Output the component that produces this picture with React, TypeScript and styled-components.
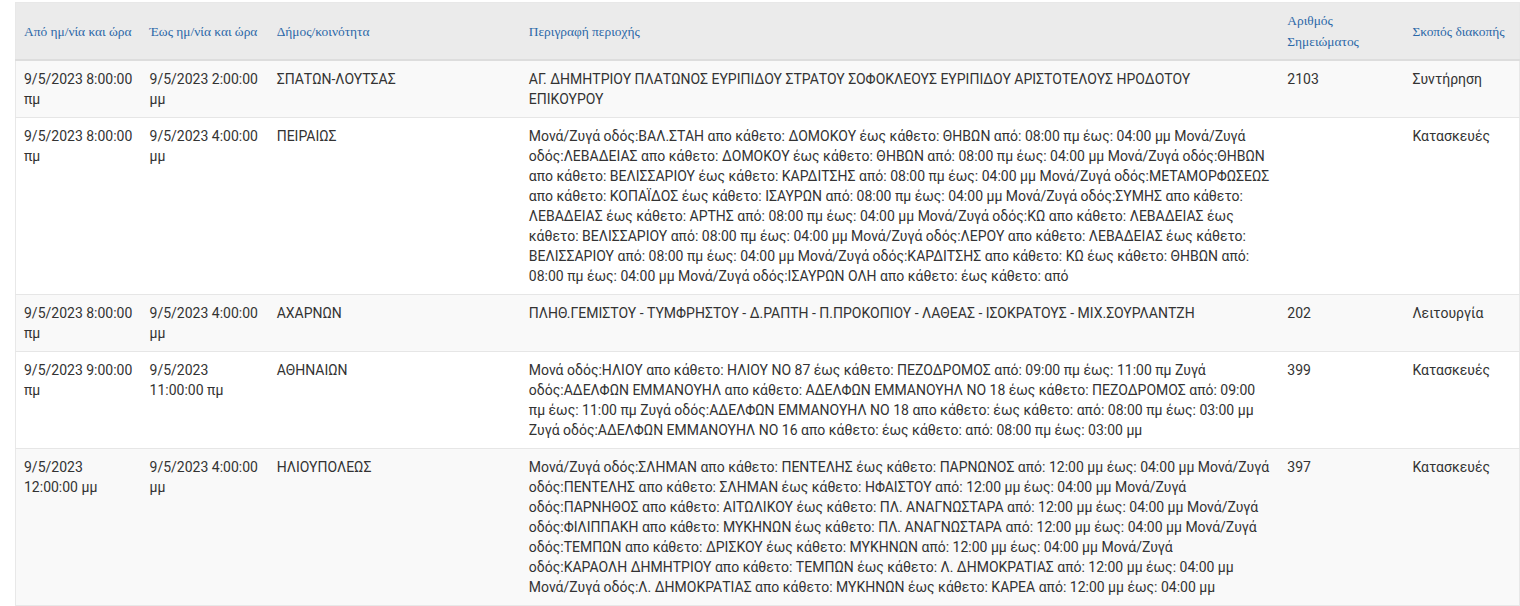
import React from 'react'
import styled, { createGlobalStyle } from 'styled-components'

type Outage = {
  from: string
  to: string
  municipality: string
  area: string
  note: string
  reason: string
}

const outages: Outage[] = [
  {
    from: '9/5/2023 8:00:00 πμ',
    to: '9/5/2023 2:00:00 μμ',
    municipality: 'ΣΠΑΤΩΝ-ΛΟΥΤΣΑΣ',
    area: 'ΑΓ. ΔΗΜΗΤΡΙΟΥ ΠΛΑΤΩΝΟΣ ΕΥΡΙΠΙΔΟΥ ΣΤΡΑΤΟΥ ΣΟΦΟΚΛΕΟΥΣ ΕΥΡΙΠΙΔΟΥ ΑΡΙΣΤΟΤΕΛΟΥΣ ΗΡΟΔΟΤΟΥ\nΕΠΙΚΟΥΡΟΥ',
    note: '2103',
    reason: 'Συντήρηση',
  },
  {
    from: '9/5/2023 8:00:00 πμ',
    to: '9/5/2023 4:00:00 μμ',
    municipality: 'ΠΕΙΡΑΙΩΣ',
    area: 'Μονά/Ζυγά οδός:ΒΑΛ.ΣΤΑΗ απο κάθετο: ΔΟΜΟΚΟΥ έως κάθετο: ΘΗΒΩΝ από: 08:00 πμ έως: 04:00 μμ Μονά/Ζυγά οδός:ΛΕΒΑΔΕΙΑΣ απο κάθετο: ΔΟΜΟΚΟΥ έως κάθετο: ΘΗΒΩΝ από: 08:00 πμ έως: 04:00 μμ Μονά/Ζυγά οδός:ΘΗΒΩΝ απο κάθετο: ΒΕΛΙΣΣΑΡΙΟΥ έως κάθετο: ΚΑΡΔΙΤΣΗΣ από: 08:00 πμ έως: 04:00 μμ Μονά/Ζυγά οδός:ΜΕΤΑΜΟΡΦΩΣΕΩΣ απο κάθετο: ΚΟΠΑΪΔΟΣ έως κάθετο: ΙΣΑΥΡΩΝ από: 08:00 πμ έως: 04:00 μμ Μονά/Ζυγά οδός:ΣΥΜΗΣ απο κάθετο: ΛΕΒΑΔΕΙΑΣ έως κάθετο: ΑΡΤΗΣ από: 08:00 πμ έως: 04:00 μμ Μονά/Ζυγά οδός:ΚΩ απο κάθετο: ΛΕΒΑΔΕΙΑΣ έως κάθετο: ΒΕΛΙΣΣΑΡΙΟΥ από: 08:00 πμ έως: 04:00 μμ Μονά/Ζυγά οδός:ΛΕΡΟΥ απο κάθετο: ΛΕΒΑΔΕΙΑΣ έως κάθετο: ΒΕΛΙΣΣΑΡΙΟΥ από: 08:00 πμ έως: 04:00 μμ Μονά/Ζυγά οδός:ΚΑΡΔΙΤΣΗΣ απο κάθετο: ΚΩ έως κάθετο: ΘΗΒΩΝ από: 08:00 πμ έως: 04:00 μμ Μονά/Ζυγά οδός:ΙΣΑΥΡΩΝ ΟΛΗ απο κάθετο: έως κάθετο: από',
    note: '',
    reason: 'Κατασκευές',
  },
  {
    from: '9/5/2023 8:00:00 πμ',
    to: '9/5/2023 4:00:00 μμ',
    municipality: 'ΑΧΑΡΝΩΝ',
    area: 'ΠΛΗΘ.ΓΕΜΙΣΤΟΥ - ΤΥΜΦΡΗΣΤΟΥ - Δ.ΡΑΠΤΗ - Π.ΠΡΟΚΟΠΙΟΥ - ΛΑΘΕΑΣ - ΙΣΟΚΡΑΤΟΥΣ - ΜΙΧ.ΣΟΥΡΛΑΝΤΖΗ',
    note: '202',
    reason: 'Λειτουργία',
  },
  {
    from: '9/5/2023 9:00:00 πμ',
    to: '9/5/2023 11:00:00 πμ',
    municipality: 'ΑΘΗΝΑΙΩΝ',
    area: 'Μονά οδός:ΗΛΙΟΥ απο κάθετο: ΗΛΙΟΥ ΝΟ 87 έως κάθετο: ΠΕΖΟΔΡΟΜΟΣ από: 09:00 πμ έως: 11:00 πμ Ζυγά οδός:ΑΔΕΛΦΩΝ ΕΜΜΑΝΟΥΗΛ απο κάθετο: ΑΔΕΛΦΩΝ ΕΜΜΑΝΟΥΗΛ ΝΟ 18 έως κάθετο: ΠΕΖΟΔΡΟΜΟΣ από: 09:00 πμ έως: 11:00 πμ Ζυγά οδός:ΑΔΕΛΦΩΝ ΕΜΜΑΝΟΥΗΛ ΝΟ 18 απο κάθετο: έως κάθετο: από: 08:00 πμ έως: 03:00 μμ Ζυγά οδός:ΑΔΕΛΦΩΝ ΕΜΜΑΝΟΥΗΛ ΝΟ 16 απο κάθετο: έως κάθετο: από: 08:00 πμ έως: 03:00 μμ',
    note: '399',
    reason: 'Κατασκευές',
  },
  {
    from: '9/5/2023 12:00:00 μμ',
    to: '9/5/2023 4:00:00 μμ',
    municipality: 'ΗΛΙΟΥΠΟΛΕΩΣ',
    area: 'Μονά/Ζυγά οδός:ΣΛΗΜΑΝ απο κάθετο: ΠΕΝΤΕΛΗΣ έως κάθετο: ΠΑΡΝΩΝΟΣ από: 12:00 μμ έως: 04:00 μμ Μονά/Ζυγά οδός:ΠΕΝΤΕΛΗΣ απο κάθετο: ΣΛΗΜΑΝ έως κάθετο: ΗΦΑΙΣΤΟΥ από: 12:00 μμ έως: 04:00 μμ Μονά/Ζυγά οδός:ΠΑΡΝΗΘΟΣ απο κάθετο: ΑΙΤΩΛΙΚΟΥ έως κάθετο: ΠΛ. ΑΝΑΓΝΩΣΤΑΡΑ από: 12:00 μμ έως: 04:00 μμ Μονά/Ζυγά οδός:ΦΙΛΙΠΠΑΚΗ απο κάθετο: ΜΥΚΗΝΩΝ έως κάθετο: ΠΛ. ΑΝΑΓΝΩΣΤΑΡΑ από: 12:00 μμ έως: 04:00 μμ Μονά/Ζυγά οδός:ΤΕΜΠΩΝ απο κάθετο: ΔΡΙΣΚΟΥ έως κάθετο: ΜΥΚΗΝΩΝ από: 12:00 μμ έως: 04:00 μμ Μονά/Ζυγά οδός:ΚΑΡΑΟΛΗ ΔΗΜΗΤΡΙΟΥ απο κάθετο: ΤΕΜΠΩΝ έως κάθετο: Λ. ΔΗΜΟΚΡΑΤΙΑΣ από: 12:00 μμ έως: 04:00 μμ Μονά/Ζυγά οδός:Λ. ΔΗΜΟΚΡΑΤΙΑΣ απο κάθετο: ΜΥΚΗΝΩΝ έως κάθετο: ΚΑΡΕΑ από: 12:00 μμ έως: 04:00 μμ',
    note: '397',
    reason: 'Κατασκευές',
  },
]

const columns = [
  { title: 'Από ημ/νία και ώρα', width: 126 },
  { title: 'Έως ημ/νία και ώρα', width: 127 },
  { title: 'Δήμος/κοινότητα', width: 252 },
  { title: 'Περιγραφή περιοχής', width: 758 },
  { title: 'Αριθμός Σημειώματος', width: 125 },
  { title: 'Σκοπός διακοπής', width: 115 },
]

const App: React.FC = () => {
  return (
    <>
      <GlobalStyle />
      <Page>
        <Table>
          <colgroup>
            {columns.map((c) => (
              <col key={c.title} style={{ width: c.width }} />
            ))}
          </colgroup>
          <thead>
            <tr>
              {columns.map((c) => (
                <HeadCell key={c.title}>
                  <SortLink href="#">{c.title}</SortLink>
                </HeadCell>
              ))}
            </tr>
          </thead>
          <tbody>
            {outages.map((o, i) => (
              <Row key={i} $striped={i % 2 === 0}>
                <Cell>{o.from}</Cell>
                <Cell>{o.to}</Cell>
                <Cell>{o.municipality}</Cell>
                <Cell>{o.area}</Cell>
                <Cell>{o.note}</Cell>
                <Cell>{o.reason}</Cell>
              </Row>
            ))}
          </tbody>
        </Table>
      </Page>
    </>
  )
}

const GlobalStyle = createGlobalStyle`
  body {
    margin: 0;
    background: #fff;
    font-family: Roboto, "Liberation Sans", Arial, sans-serif;
    font-size: 14px;
    line-height: 20px;
    color: #333;
  }
`

const Page = styled.div`
  padding: 2px 0 0 15px;
`

const Table = styled.table`
  width: 1505px;
  table-layout: fixed;
  border-collapse: collapse;
  border: 1px solid #e8e8e8;
`

const HeadCell = styled.th`
  background: #ebebeb;
  border-bottom: 2px solid #dddddd;
  padding: 7px 8px 7px;
  text-align: left;
  vertical-align: middle;
  font-family: "Liberation Serif", "Times New Roman", serif;
  font-size: 13.4px;
  font-weight: normal;
  line-height: 21px;
`

const SortLink = styled.a`
  color: #2b68a8;
  text-decoration: none;
`

const Row = styled.tr<{ $striped: boolean }>`
  background: ${(p) => (p.$striped ? '#f9f9f9' : '#ffffff')};
  border-top: 1px solid #e6e6e6;
`

const Cell = styled.td`
  padding: 8px;
  vertical-align: top;
  line-height: 20px;
  white-space: pre-line;
`

export default App
